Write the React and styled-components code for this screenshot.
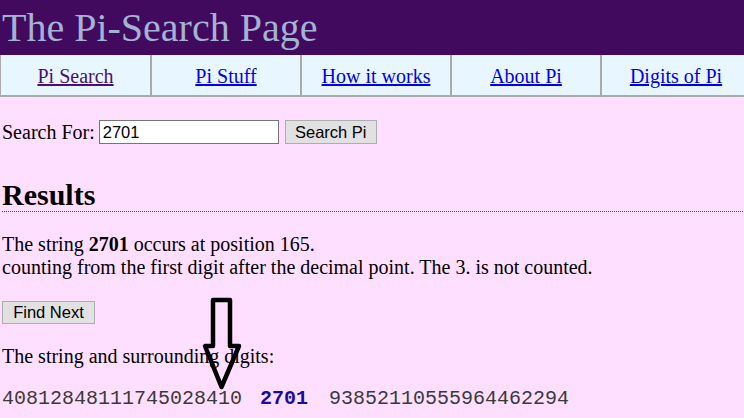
import React from 'react';
import styled, { createGlobalStyle } from 'styled-components';

const GlobalStyle = createGlobalStyle`
  html, body {
    margin: 0;
    padding: 0;
    background: #ffdfff;
    overflow: hidden;
  }
  body {
    font-family: "Liberation Serif", "Times New Roman", serif;
    font-size: 20px;
    color: #000;
  }
`;

const navItems = ['Pi Search', 'Pi Stuff', 'How it works', 'About Pi', 'Digits of Pi'];

const App = () => (
  <Page>
    <GlobalStyle />
    <Header>
      <Title>The Pi-Search Page</Title>
    </Header>
    <Nav>
      {navItems.map((item, i) => (
        <NavCell key={item}>
          <NavLink href="#" $visited={i === 0}>{item}</NavLink>
        </NavCell>
      ))}
    </Nav>
    <Main>
      <SearchRow>
        <span>Search For:</span>
        <SearchInput defaultValue="2701" />
        <Button type="button">Search Pi</Button>
      </SearchRow>
      <Heading>Results</Heading>
      <Para>
        The string <b>2701</b> occurs at position 165.
        <br />
        counting from the first digit after the decimal point. The 3. is not counted.
      </Para>
      <NextButton type="button">Find Next</NextButton>
      <Caption>The string and surrounding digits:</Caption>
      <Digits>
        40812848111745028410<Match>2701</Match>93852110555964462294
      </Digits>
      {/* pointer drawn over the text, marking where the match sits */}
      <Arrow width="44" height="98" viewBox="0 0 44 98">
        <path
          d="M11 3 H28 V49 H37 L19.5 90 L3 49 H11 Z"
          fill="none"
          stroke="#000"
          strokeWidth="4.5"
          strokeLinejoin="round"
        />
      </Arrow>
    </Main>
  </Page>
);

export default App;

const Page = styled.div`
  position: relative;
  width: 744px;
  height: 418px;
  overflow: hidden;
`;

const Header = styled.header`
  height: 55px;
  background: #410a5e;
  padding-left: 2px;
`;

const Title = styled.h1`
  margin: 0;
  padding-top: 2px;
  font-size: 40px;
  font-weight: normal;
  line-height: 52px;
  color: #a4b2d4;
  white-space: nowrap;
`;

const Nav = styled.nav`
  display: grid;
  grid-template-columns: repeat(5, 150px);
  width: 750px;
  background: #e8f7ff;
  border-bottom: 2px solid #aaa;
`;

const NavCell = styled.div`
  height: 40px;
  display: flex;
  align-items: center;
  justify-content: center;
  border-left: 2px solid #aaa;
  &:first-child {
    border-left-width: 1px;
  }
`;

const NavLink = styled.a`
  color: ${({ $visited }) => ($visited ? '#4b0f6e' : '#0000ee')};
  text-decoration: underline;
  font-size: 20px;
  padding-top: 3px;
`;

const Main = styled.main`
  padding: 0 2px;
`;

const SearchRow = styled.form`
  display: flex;
  align-items: center;
  height: 24px;
  margin: 23px 0 0;
`;

const SearchInput = styled.input`
  box-sizing: border-box;
  width: 180px;
  height: 24px;
  margin-left: 4px;
  padding: 1px 3px;
  border: 1px solid #767676;
  background: #fff;
  font-family: "Liberation Sans", Arial, sans-serif;
  font-size: 16.5px;
  color: #000;
  outline: none;
`;

const Button = styled.button`
  box-sizing: border-box;
  height: 24px;
  width: 92px;
  margin-left: 6px;
  padding: 0;
  background: #e1e1e1;
  border: 1px solid #adadad;
  font-family: "Liberation Sans", Arial, sans-serif;
  font-size: 16.5px;
  color: #000;
`;

const NextButton = styled(Button)`
  display: block;
  height: 23px;
  width: 93px;
  margin: 22px 0 0;
`;

const Heading = styled.h2`
  margin: 34px -2px 0 0;
  padding-bottom: 1px;
  font-size: 30px;
  font-weight: bold;
  line-height: 33px;
  background-image: repeating-linear-gradient(
    to right,
    #ff0000 0 1px,
    transparent 1px 2px
  );
  background-size: 100% 1px;
  background-position: left bottom;
  background-repeat: no-repeat;
`;

const Para = styled.p`
  margin: 21px 0 0;
  line-height: 23px;
`;

const Caption = styled.p`
  margin: 21px 0 0;
  line-height: 23px;
`;

const Digits = styled.div`
  margin-top: 19px;
  font-family: "Liberation Mono", "Courier New", monospace;
  font-size: 20px;
  line-height: 23px;
  color: #3a3a3a;
  white-space: nowrap;
`;

const Match = styled.b`
  margin: 0 21px 0 18px;
  color: #1c0a9e;
`;

const Arrow = styled.svg`
  position: absolute;
  left: 202px;
  top: 297px;
`;
